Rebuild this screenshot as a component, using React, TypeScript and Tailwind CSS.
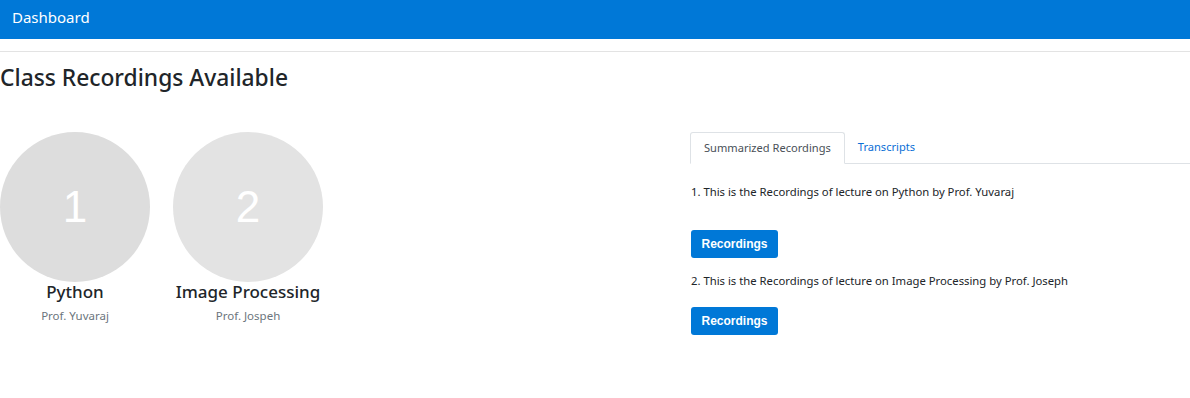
import React from "react";

const font = { fontFamily: '"Segoe UI", "Noto Sans", "Open Sans", sans-serif' };

function Course({ n, title, prof, bg }: { n: string; title: string; prof: string; bg: string }) {
  return (
    <div className="flex w-[150px] flex-col items-center">
      <div
        className={`flex h-[150px] w-[150px] items-center justify-center rounded-full ${bg} text-[44px] text-white`}
        style={{ fontFamily: '"Liberation Sans", Arial, sans-serif' }}
      >
        {n}
      </div>
      <div className="mt-[-1px] whitespace-nowrap text-[17px] font-medium leading-[22px] text-[#212529]">{title}</div>
      <div className="mt-[5px] text-[11.5px] leading-[16px] text-[#6c757d]">{prof}</div>
    </div>
  );
}

export default function App() {
  return (
    <div className="min-h-[398px] bg-white text-[#212529]" style={font}>
      <div className="flex h-[39px] items-center bg-[#0078d7] px-[12px] pb-[4px] text-[15px] text-white">Dashboard</div>
      <div className="mt-[12px] border-t border-[#e3e3e3]" />
      <h1 className="mt-[11px] text-[22.8px] font-medium leading-[30px]">Class Recordings Available</h1>
      <div className="mt-[39px] flex">
        <div className="flex w-[690px] gap-[23px]">
          <Course n="1" title="Python" prof="Prof. Yuvaraj" bg="bg-[#dddddd]" />
          <Course n="2" title="Image Processing" prof="Prof. Jospeh" bg="bg-[#e3e3e3]" />
        </div>
        <div className="flex-1">
          <div className="flex h-[32px] border-b border-[#dee2e6] text-[11.1px]">
            <div className="-mb-px flex items-center rounded-t-[3px] border border-b-white border-[#dee2e6] bg-white px-[13px] text-[#495057]">
              Summarized Recordings
            </div>
            <div className="flex items-center px-[13px] text-[#0b6fd6]">Transcripts</div>
          </div>
          <div className="pl-[1px] text-[11.3px]">
            <p className="mt-[20px] leading-[16px]">1. This is the Recordings of lecture on Python by Prof. Yuvaraj</p>
            <button
              className="mt-[30px] h-[28px] w-[87px] rounded-[3px] bg-[#0078d7] text-[12px] font-bold text-white"
              style={{ fontFamily: '"Liberation Sans", Arial, sans-serif' }}
            >
              Recordings
            </button>
            <p className="mt-[15px] leading-[16px]">2. This is the Recordings of lecture on Image Processing by Prof. Joseph</p>
            <button
              className="mt-[18px] block h-[28px] w-[87px] rounded-[3px] bg-[#0078d7] text-[12px] font-bold text-white"
              style={{ fontFamily: '"Liberation Sans", Arial, sans-serif' }}
            >
              Recordings
            </button>
          </div>
        </div>
      </div>
    </div>
  );
}
